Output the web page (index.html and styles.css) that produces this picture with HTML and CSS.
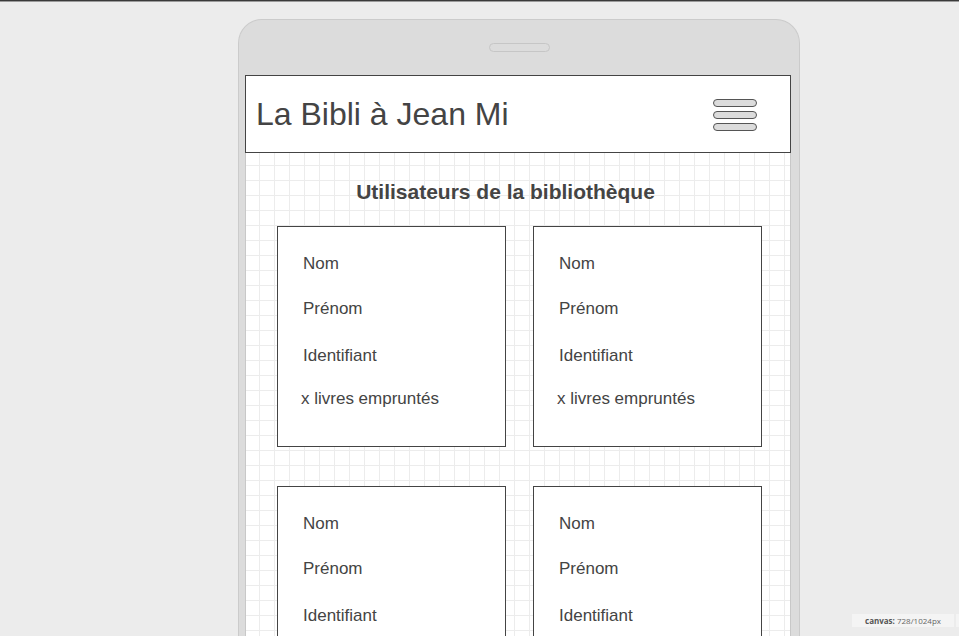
FILE: index.html
```html
<!DOCTYPE html>
<html lang="fr">
<head>
<meta charset="utf-8">
<title>La Bibli à Jean Mi</title>
<link rel="stylesheet" href="styles.css">
</head>
<body>
<div class="topbar"></div>
<div class="stage">
  <div class="phone">
    <div class="speaker"></div>
    <header class="app-header">
      <h1 class="app-title">La Bibli à Jean Mi</h1>
      <div class="burger">
        <span class="burger-bar"></span>
        <span class="burger-bar"></span>
        <span class="burger-bar"></span>
      </div>
    </header>
    <main class="screen">
      <h2 class="section-title">Utilisateurs de la bibliothèque</h2>
      <div class="cards">
        <div class="card">
          <p class="field f-nom">Nom</p>
          <p class="field f-prenom">Prénom</p>
          <p class="field f-id">Identifiant</p>
          <p class="field f-livres">x livres empruntés</p>
        </div>
        <div class="card">
          <p class="field f-nom">Nom</p>
          <p class="field f-prenom">Prénom</p>
          <p class="field f-id">Identifiant</p>
          <p class="field f-livres">x livres empruntés</p>
        </div>
        <div class="card">
          <p class="field f-nom">Nom</p>
          <p class="field f-prenom">Prénom</p>
          <p class="field f-id">Identifiant</p>
          <p class="field f-livres">x livres empruntés</p>
        </div>
        <div class="card">
          <p class="field f-nom">Nom</p>
          <p class="field f-prenom">Prénom</p>
          <p class="field f-id">Identifiant</p>
          <p class="field f-livres">x livres empruntés</p>
        </div>
      </div>
    </main>
  </div>
</div>
<div class="canvas-label"><b>canvas:</b> 728/1024px</div>
<div class="canvas-label-next"></div>
</body>
</html>
```
FILE: styles.css
```css
html, body {
  margin: 0;
  padding: 0;
  height: 100%;
  overflow: hidden;
}
body {
  background: #ececec;
  font-family: "Liberation Sans", Arial, sans-serif;
  color: #444;
}
.topbar {
  height: 1px;
  background: #3a3a3a;
  border-bottom: 1px solid #9a9a9a;
}
.stage {
  padding: 17px 0 0 238px;
}
.phone {
  box-sizing: border-box;
  width: 562px;
  height: 700px;
  background: #dcdcdc;
  border: 1px solid #cbcbcb;
  border-bottom: none;
  border-radius: 24px 24px 0 0;
  padding: 23px 8px 0 6px;
}
.speaker {
  box-sizing: border-box;
  width: 61px;
  height: 9px;
  margin: 0 0 23px 244px;
  border: 1px solid #c6c6c6;
  border-radius: 5px;
}
.app-header {
  box-sizing: border-box;
  height: 78px;
  background: #fff;
  border: 1px solid #444;
  display: flex;
  align-items: center;
  justify-content: space-between;
  padding: 0 33px 0 10px;
}
.app-title {
  margin: 0;
  font-size: 32px;
  font-weight: normal;
  color: #444;
}
.burger {
  display: flex;
  flex-direction: column;
  gap: 4px;
  padding-top: 2px;
}
.burger-bar {
  box-sizing: border-box;
  display: block;
  width: 44px;
  height: 8px;
  background: #dcdcdc;
  border: 1px solid #555;
  border-radius: 4px;
}
.screen {
  display: block;
  box-sizing: border-box;
  height: 600px;
  border-left: 1px solid #c8c8c8;
  border-right: 1px solid #c8c8c8;
  background-color: #fff;
  background-image:
    linear-gradient(to right, transparent 14px, #ececec 14px),
    linear-gradient(to bottom, transparent 14px, #ececec 14px);
  background-size: 15px 15px;
  background-position: -1px -2px;
  padding-top: 27px;
}
.section-title {
  margin: 0 25px 0 0;
  text-align: center;
  font-size: 21px;
  line-height: 24px;
  font-weight: bold;
  color: #444;
}
.cards {
  display: grid;
  grid-template-columns: 229px 229px;
  column-gap: 27px;
  row-gap: 39px;
  padding-left: 31px;
  margin-top: 22px;
}
.card {
  box-sizing: border-box;
  height: 221px;
  background: #fff;
  border: 1px solid #444;
  padding: 28px 0 0 25px;
}
.field {
  margin: 0;
  font-size: 17px;
  line-height: 18px;
  color: #444;
}
.f-prenom { margin-top: 27px; }
.f-id { margin-top: 29px; }
.f-livres { margin-top: 25px; margin-left: -2px; }

.canvas-label {
  position: fixed;
  right: 5px;
  bottom: 9px;
  width: 102px;
  height: 13px;
  box-sizing: border-box;
  background: #f4f4f4;
  font-family: "Open Sans", "DejaVu Sans", sans-serif;
  font-size: 8px;
  line-height: 13px;
  color: #666;
  text-align: center;
}
.canvas-label b {
  color: #555;
  font-weight: bold;
}
.canvas-label-next {
  position: fixed;
  left: 956px;
  bottom: 9px;
  width: 10px;
  height: 13px;
  background: #f4f4f4;
}
```
